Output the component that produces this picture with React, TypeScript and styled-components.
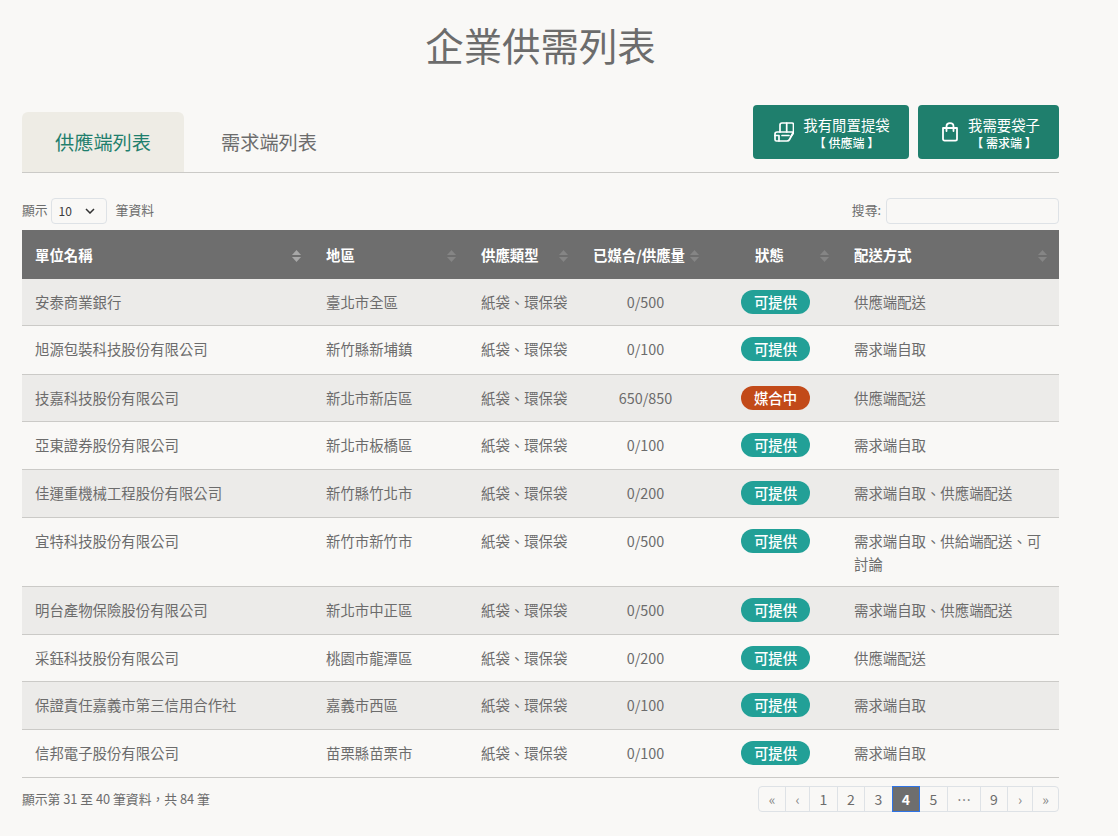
import React from 'react';
import styled, { createGlobalStyle } from 'styled-components';

const Global = createGlobalStyle`
  html, body { margin: 0; padding: 0; background: #f9f8f6; }
  body { font-family: "Noto Sans CJK TC", "Noto Sans", sans-serif; color: #6c6c6c; }
  * { box-sizing: border-box; }
`;

const Page = styled.div`
  width: 1118px;
  height: 836px;
  padding: 0 59px 0 22px;
  overflow: hidden;
`;
const Title = styled.h1`
  margin: 0;
  padding-top: 16px;
  height: 105px;
  text-align: center;
  font-size: 38.4px;
  line-height: 57px;
  font-weight: 400;
  color: #6c6c6c;
`;
const TabBar = styled.div`
  display: flex;
  justify-content: space-between;
  align-items: flex-end;
  height: 68px;
  border-bottom: 1px solid #cbcac7;
`;
const Tabs = styled.div`
  display: flex;
  align-items: flex-end;
  gap: 4px;
`;
const Tab = styled.div<{ $active?: boolean }>`
  width: 162px;
  height: 60px;
  display: flex;
  align-items: center;
  justify-content: center;
  font-size: 19.2px;
  border-radius: 6px 6px 0 0;
  background: ${p => (p.$active ? '#eeece5' : 'transparent')};
  color: ${p => (p.$active ? '#1f7f6d' : '#6c6c6c')};
`;
const Actions = styled.div`
  display: flex;
  gap: 9px;
  align-self: flex-start;
`;
const ActionButton = styled.div<{ $w: number; $shift: number }>`
  width: ${p => p.$w}px;
  height: 54px;
  padding-left: ${p => p.$shift}px;
  background: #1f7f6d;
  border-radius: 4px;
  color: #fff;
  display: flex;
  align-items: center;
  justify-content: center;
  gap: 9px;
`;
const ActionText = styled.div`
  display: flex;
  flex-direction: column;
  align-items: center;
  font-size: 14.4px;
  line-height: 20px;
  padding-top: 1px;
  small {
    font-size: 12px;
    line-height: 15px;
    font-weight: 500;
  }
`;
const Controls = styled.div`
  display: flex;
  justify-content: space-between;
  align-items: flex-start;
  height: 26px;
  margin-top: 25px;
  margin-bottom: 6px;
  font-size: 12.8px;
  line-height: 24px;
`;
const Group = styled.div`
  display: flex;
  align-items: flex-start;
`;
const SelectBox = styled.div`
  width: 56px;
  height: 26px;
  margin: 0 9px 0 3px;
  border: 1px solid #dee2e6;
  border-radius: 4px;
  display: flex;
  align-items: center;
  justify-content: space-between;
  padding: 0 11px 0 7px;
  color: #3c3c3c;
  font-size: 12px;
`;
const SearchBox = styled.div`
  width: 173px;
  height: 26px;
  margin-left: 5px;
  border: 1px solid #dee2e6;
  border-radius: 4px;
`;
const Table = styled.table`
  width: 1037px;
  table-layout: fixed;
  border-collapse: collapse;
  font-size: 14.4px;
  line-height: 23px;
`;
const Head = styled.th<{ $center?: boolean }>`
  position: relative;
  height: 49px;
  padding: 0 26px 0 13px;
  background: #6e6e6e;
  color: #fff;
  font-weight: 700;
  text-align: ${p => (p.$center ? 'center' : 'left')};
  white-space: nowrap;
`;
const SortIcon = styled.svg<{ $active?: boolean }>`
  position: absolute;
  right: 12px;
  top: 20px;
  width: 9px;
  height: 12px;
  fill: ${p => (p.$active ? '#a8a8a8' : '#858585')};
`;
const Cell = styled.td<{ $center?: boolean; $nowrap?: boolean }>`
  height: 47.8px;
  padding: 11px 13px;
  vertical-align: top;
  text-align: ${p => (p.$center ? 'center' : 'left')};
  white-space: ${p => (p.$nowrap ? 'nowrap' : 'normal')};
  color: #6c6c6c;
`;
const Row = styled.tr<{ $odd: boolean }>`
  background: ${p => (p.$odd ? '#ecebe9' : 'transparent')};
  border-bottom: 1px solid #cbcac7;
  &:nth-child(1) ${Cell} { height: 46.4px; }
  &:nth-child(2) ${Cell} { height: 48.5px; }
`;
const Badge = styled.span<{ $matching: boolean }>`
  display: block;
  width: 69px;
  height: 24px;
  line-height: 24px;
  margin-left: 17px;
  border-radius: 12px;
  background: ${p => (p.$matching ? '#c24a19' : '#22a097')};
  color: #fff;
  font-weight: 500;
  font-size: 14.4px;
  text-align: center;
`;
const Footer = styled.div`
  display: flex;
  justify-content: space-between;
  align-items: flex-start;
  margin-top: 8px;
  height: 26px;
  font-size: 12.8px;
  line-height: 25px;
`;
const Pager = styled.div`
  display: flex;
  height: 26px;
  padding-left: 1px;
`;
const PageItem = styled.div<{ $w: number; $active?: boolean; $muted?: boolean }>`
  position: relative;
  width: ${p => p.$w}px;
  margin-left: -1px;
  display: flex;
  align-items: center;
  justify-content: center;
  font-size: 14px;
  border: 1px solid ${p => (p.$active ? '#2f74e6' : '#dee2e6')};
  z-index: ${p => (p.$active ? 1 : 0)};
  background: ${p => (p.$active ? '#6e6e6e' : 'transparent')};
  color: ${p => (p.$active ? '#fff' : p.$muted ? '#858585' : '#6c6c6c')};
  font-weight: ${p => (p.$active ? 700 : 400)};
  &:first-child { border-radius: 4px 0 0 4px; }
  &:last-child { border-radius: 0 4px 4px 0; }
`;

const columns = [
  { label: '單位名稱', w: 291, active: true },
  { label: '地區', w: 155 },
  { label: '供應類型', w: 112 },
  { label: '已媒合/供應量', w: 131, center: true },
  { label: '狀態', w: 130, center: true },
  { label: '配送方式', w: 218 },
];

const rows = [
  ['安泰商業銀行', '臺北市全區', '0/500', '可提供', '供應端配送'],
  ['旭源包裝科技股份有限公司', '新竹縣新埔鎮', '0/100', '可提供', '需求端自取'],
  ['技嘉科技股份有限公司', '新北市新店區', '650/850', '媒合中', '供應端配送'],
  ['亞東證券股份有限公司', '新北市板橋區', '0/100', '可提供', '需求端自取'],
  ['佳運重機械工程股份有限公司', '新竹縣竹北市', '0/200', '可提供', '需求端自取、供應端配送'],
  ['宜特科技股份有限公司', '新竹市新竹市', '0/500', '可提供', '需求端自取、供給端配送、可討論'],
  ['明台產物保險股份有限公司', '新北市中正區', '0/500', '可提供', '需求端自取、供應端配送'],
  ['采鈺科技股份有限公司', '桃園市龍潭區', '0/200', '可提供', '供應端配送'],
  ['保證責任嘉義市第三信用合作社', '嘉義市西區', '0/100', '可提供', '需求端自取'],
  ['信邦電子股份有限公司', '苗栗縣苗栗市', '0/100', '可提供', '需求端自取'],
];

const pages = [
  { t: '«', w: 28, m: true },
  { t: '‹', w: 25, m: true },
  { t: '1', w: 29 },
  { t: '2', w: 28 },
  { t: '3', w: 29 },
  { t: '4', w: 28, a: true },
  { t: '5', w: 29 },
  { t: '…', w: 34 },
  { t: '9', w: 28 },
  { t: '›', w: 26, m: true },
  { t: '»', w: 27, m: true },
];

const BagsIcon = () => (
  <svg width="20" height="20" viewBox="0 0 20 20" fill="none" stroke="#fff" strokeWidth="1.7" strokeLinejoin="round" strokeLinecap="round">
    <path d="M6 10V3C6 2 7 1 8 1H18C19 1 19.5 1.5 19.5 2.5V11L17 14.5" />
    <path d="M12.7 1V10" />
    <path d="M1 12C1 10.8 2 10 3.2 10H19.5L15.5 17.5C15 18.5 14 19 13 19H2.5C1.5 19 1 18.5 1 17.5Z" />
    <path d="M1 13.5H5V19" />
    <path d="M8 13.5H15" />
  </svg>
);

const BagIcon = () => (
  <svg width="18" height="20" viewBox="0 0 18 20" fill="none" stroke="#fff" strokeWidth="1.8" strokeLinejoin="round" strokeLinecap="round">
    <path d="M2 6H16V17C16 18 15.4 18.6 14.4 18.6H3.6C2.6 18.6 2 18 2 17Z" />
    <path d="M5.5 9V4.5C5.5 2.5 7 1.2 9 1.2S12.5 2.5 12.5 4.5V9" />
  </svg>
);

const Sort = ({ active }: { active?: boolean }) => (
  <SortIcon $active={active} viewBox="0 0 9 12">
    <path d="M4.5 0 9 5H0z" />
    <path d="M0 7h9l-4.5 5z" />
  </SortIcon>
);

export default function App() {
  return (
    <Page>
      <Global />
      <Title>企業供需列表</Title>
      <TabBar>
        <Tabs>
          <Tab $active>供應端列表</Tab>
          <Tab>需求端列表</Tab>
        </Tabs>
        <Actions>
          <ActionButton $w={156} $shift={2}>
            <BagsIcon />
            <ActionText>我有閒置提袋<small>【 供應端 】</small></ActionText>
          </ActionButton>
          <ActionButton $w={141} $shift={4}>
            <BagIcon />
            <ActionText>我需要袋子<small>【 需求端 】</small></ActionText>
          </ActionButton>
        </Actions>
      </TabBar>
      <Controls>
        <Group>
          顯示
          <SelectBox>
            10
            <svg width="10" height="6" viewBox="0 0 10 6" fill="none" stroke="#333" strokeWidth="1.5"><path d="M1 1l4 4 4-4" /></svg>
          </SelectBox>
          筆資料
        </Group>
        <Group>
          搜尋:
          <SearchBox />
        </Group>
      </Controls>
      <Table>
        <colgroup>
          {columns.map(c => <col key={c.label} style={{ width: c.w }} />)}
        </colgroup>
        <thead>
          <tr>
            {columns.map(c => (
              <Head key={c.label} $center={c.center}>
                {c.label}
                <Sort active={c.active} />
              </Head>
            ))}
          </tr>
        </thead>
        <tbody>
          {rows.map((r, i) => (
            <Row key={r[0]} $odd={i % 2 === 0}>
              <Cell>{r[0]}</Cell>
              <Cell>{r[1]}</Cell>
              <Cell $nowrap>紙袋、環保袋</Cell>
              <Cell $center>{r[2]}</Cell>
              <Cell $center><Badge $matching={r[3] === '媒合中'}>{r[3]}</Badge></Cell>
              <Cell>{r[4]}</Cell>
            </Row>
          ))}
        </tbody>
      </Table>
      <Footer>
        <span>顯示第 31 至 40 筆資料，共 84 筆</span>
        <Pager>
          {pages.map(p => (
            <PageItem key={p.t} $w={p.w} $active={p.a} $muted={p.m}>{p.t}</PageItem>
          ))}
        </Pager>
      </Footer>
    </Page>
  );
}
